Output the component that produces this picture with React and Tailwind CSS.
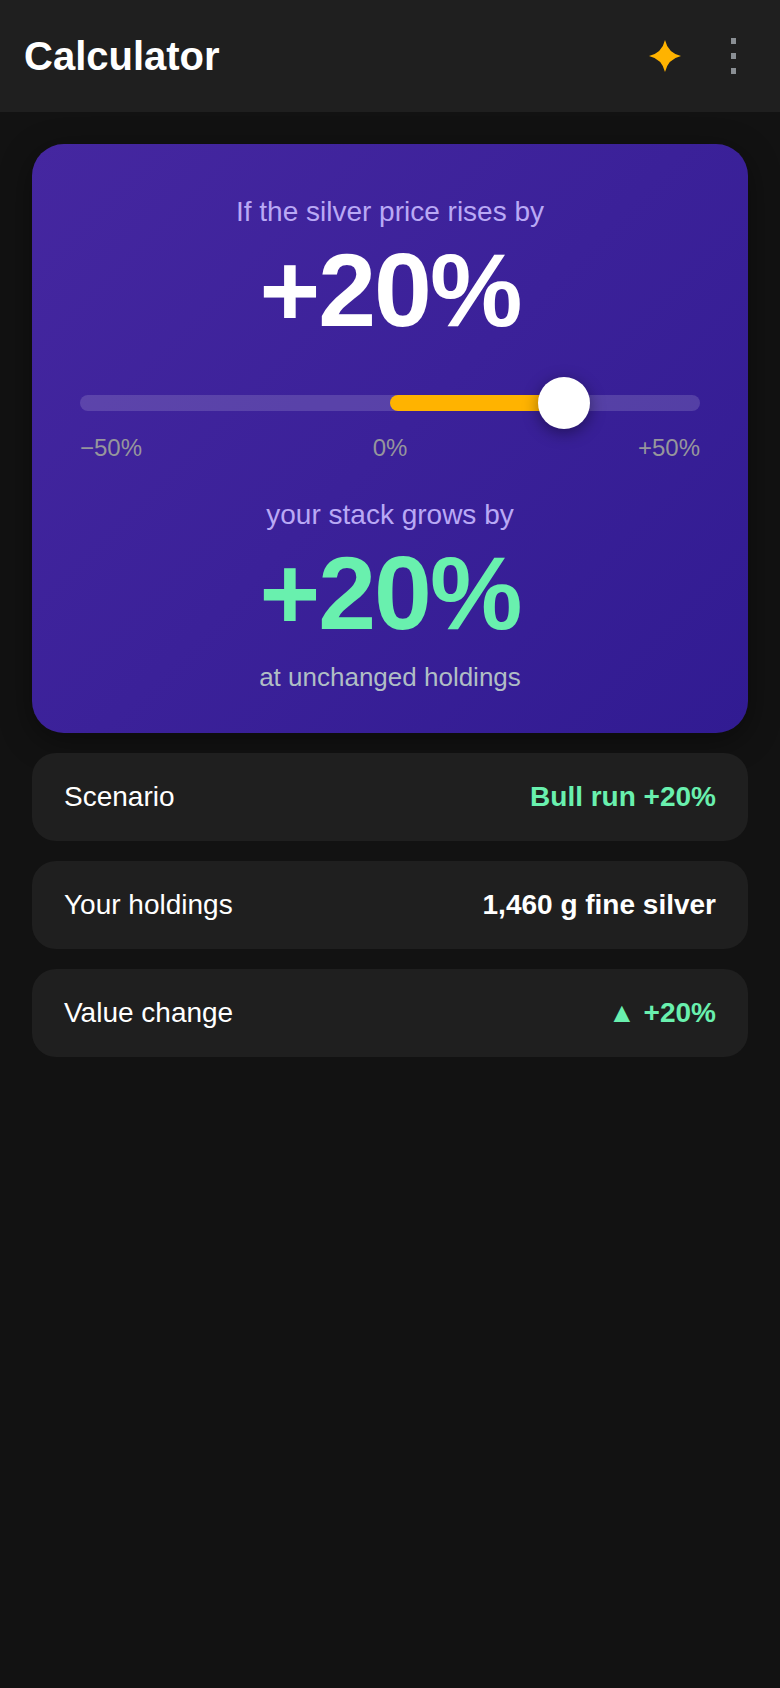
const rows = [
  { label: 'Scenario', value: 'Bull run +20%', valueClass: 'text-[#69f0ae]' },
  { label: 'Your holdings', value: '1,460 g fine silver', valueClass: 'text-white' },
  { label: 'Value change', value: '▲ +20%', valueClass: 'text-[#69f0ae]' },
];

const Sparkle = () => (
  <svg width="32" height="32" viewBox="0 0 32 32" aria-hidden="true">
    <path d="M16 0Q19 13 32 16Q19 19 16 32Q13 19 0 16Q13 13 16 0Z" fill="#ffb300" />
  </svg>
);

const MoreDots = () => (
  <svg width="5" height="36" viewBox="0 0 5 36" aria-hidden="true">
    <rect x="0" y="0" width="5" height="6" fill="#8a8f94" />
    <rect x="0" y="15" width="5" height="6" fill="#8a8f94" />
    <rect x="0" y="30" width="5" height="6" fill="#8a8f94" />
  </svg>
);

const App = () => {
  return (
    <div className="min-h-[1688px] bg-[#121212] font-['Liberation_Sans',Arial,sans-serif]">
      {/* Top bar */}
      <header className="h-[112px] bg-[#1f1f1f] flex items-center justify-between pl-6 pr-11">
        <h1 className="text-[40px] font-bold text-white leading-none">Calculator</h1>
        <div className="flex items-center gap-[50px]">
          <Sparkle />
          <MoreDots />
        </div>
      </header>

      <main className="px-8 pt-8 flex flex-col gap-5">
        {/* Hero card */}
        <section className="h-[589px] rounded-[32px] bg-[linear-gradient(135deg,#4527a0,#311b92)] shadow-[0_8px_32px_rgba(0,0,0,0.4)] px-12 pt-[50px] flex flex-col">
          <p className="text-[28px] leading-[36px] text-center text-[#b9a9f5]">If the silver price rises by</p>
          <p className="text-[104px] leading-[120px] font-bold tracking-[-2px] text-center text-white">+20%</p>

          {/* Slider */}
          <div className="relative h-[52px] mt-[27px] flex items-center">
            <div className="relative w-full h-4 rounded-lg bg-white/15 overflow-hidden">
              <div className="absolute left-1/2 top-0 bottom-0 w-[28%] rounded-l-lg bg-[#ffb300]"></div>
            </div>
            <div className="absolute left-[458px] top-0 w-[52px] h-[52px] rounded-full bg-white shadow-[0_4px_16px_rgba(0,0,0,0.4)]"></div>
          </div>

          <div className="flex justify-between mt-[1px] text-[24px] leading-[36px] text-[#96969c]">
            <span>−50%</span>
            <span>0%</span>
            <span>+50%</span>
          </div>

          <p className="mt-[31px] text-[28px] leading-[36px] text-center text-[#b9a9f5]">your stack grows by</p>
          <p className="text-[104px] leading-[120px] font-bold tracking-[-2px] text-center text-[#69f0ae]">+20%</p>
          <p className="mt-[6px] text-[26px] leading-[36px] text-center text-[#b0bec5]">at unchanged holdings</p>
        </section>

        {/* Summary rows */}
        {rows.map((row) => (
          <div key={row.label} className="h-[88px] rounded-3xl bg-[#1f1f1f] px-8 flex items-center justify-between text-[28px]">
            <span className="text-white">{row.label}</span>
            <span className={`font-bold ${row.valueClass}`}>{row.value}</span>
          </div>
        ))}
      </main>
    </div>
  );
};

export default App;
